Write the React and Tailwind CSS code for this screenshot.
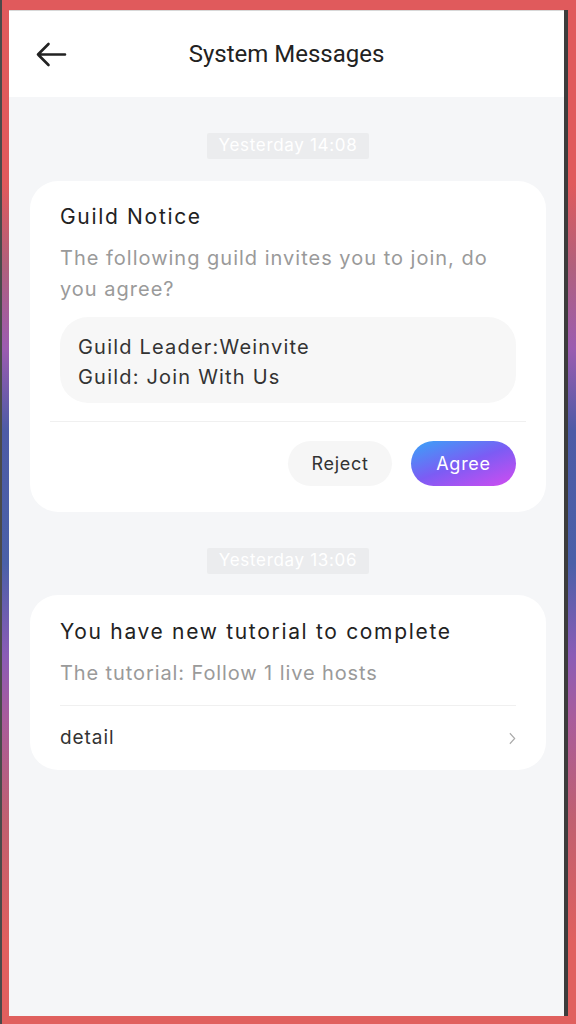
// System Messages screen

const body = { fontFamily: 'Inter, "Noto Sans", sans-serif' }

function Stamp({ children }) {
  return (
    <div className="flex justify-center">
      <span className="h-[26px] px-[12px] flex items-center bg-[#ebecee] text-white text-[17px] tracking-[0.04em] rounded-[2px]">
        {children}
      </span>
    </div>
  )
}

export default function App() {
  return (
    <div className="w-[576px] h-[1024px] flex flex-col pt-[10px] pb-[8px] pl-[7px] border-l-2 border-[#4a4a4a] bg-[linear-gradient(to_bottom,#e05a5c_0%,#e05a5c_18%,#b0607c_26%,#9c5cb0_34%,#4d5ba6_42%,#4a60a8_55%,#8a5cb6_64%,#a85c9c_70%,#c06070_80%,#e0605e_92%,#e0605e_100%)]">
      <div className="flex-1 flex mr-[8px] border-r-[4px] border-[#3c3c3c]">
        <div className="flex-1 flex flex-col bg-[#f5f6f8] border-t border-[#d8d8d8]" style={body}>

          {/* ── Header ───────────────────────────── */}
          <header className="h-[86px] bg-white flex items-center relative">
            <button className="absolute left-[25px] top-[30px] w-[34px] h-[28px]" aria-label="Back">
              <svg viewBox="0 0 34 28" className="w-[34px] h-[28px]" fill="none" stroke="#222" strokeWidth="2.6" strokeLinecap="round" strokeLinejoin="round">
                <path d="M31 13.5H4M14.5 3L4 13.5L14.5 24" />
              </svg>
            </button>
            <h1 className="flex-1 text-center text-[24px] font-normal text-[#222]" style={{ fontFamily: 'Roboto, sans-serif' }}>
              System Messages
            </h1>
          </header>

          {/* ── Messages ─────────────────────────── */}
          <main className="flex flex-col pl-[21px] pr-[18px] pt-[36px]">
            <Stamp>Yesterday 14:08</Stamp>

            <section className="mt-[22px] bg-white rounded-[28px] pt-[22px] pb-[26px]">
              <div className="px-[30px]">
                <h2 className="text-[21px] leading-[28px] tracking-[0.08em] text-[#222]">Guild Notice</h2>
                <p className="mt-[12px] text-[20px] leading-[31px] tracking-[0.05em] text-[#9a9a9a]">
                  The following guild invites you to join, do you agree?
                </p>
                <div className="mt-[12px] bg-[#f7f7f7] rounded-[28px] px-[18px] pt-[15px] pb-[11px] text-[20px] leading-[30px] tracking-[0.06em] text-[#333]">
                  <div>Guild Leader:Weinvite</div>
                  <div>Guild: Join With Us</div>
                </div>
              </div>
              <div className="mx-[20px] mt-[18px] border-t border-[#f0f0f0]" />
              <div className="px-[30px] mt-[19px] flex justify-end gap-[19px]">
                <button className="w-[104px] h-[45px] rounded-full bg-[#f6f6f6] text-[18px] tracking-[0.04em] text-[#333]">Reject</button>
                <button className="w-[105px] h-[45px] rounded-full bg-[linear-gradient(160deg,#38a4f8_0%,#7c5cf4_50%,#d24cf0_100%)] text-[18px] tracking-[0.04em] text-white">Agree</button>
              </div>
            </section>

            <div className="mt-[36px]">
              <Stamp>Yesterday 13:06</Stamp>
            </div>

            <section className="mt-[21px] bg-white rounded-[28px] pt-[21px]">
              <div className="px-[30px]">
                <h2 className="text-[21px] leading-[32px] tracking-[0.08em] text-[#222]">You have new tutorial to complete</h2>
                <p className="mt-[10px] text-[20px] leading-[30px] tracking-[0.045em] text-[#9a9a9a]">The tutorial: Follow 1 live hosts</p>
              </div>
              <div className="mx-[30px] mt-[17px] border-t border-[#f0f0f0]" />
              <div className="px-[30px] h-[64px] flex items-center justify-between text-[19px] tracking-[0.05em] text-[#333]">
                <span>detail</span>
                <svg viewBox="0 0 8 14" className="w-[7px] h-[13px]" fill="none" stroke="#aaa" strokeWidth="1.3">
                  <path d="M1 1l5.5 6L1 13" />
                </svg>
              </div>
            </section>
          </main>
        </div>
      </div>
    </div>
  )
}
